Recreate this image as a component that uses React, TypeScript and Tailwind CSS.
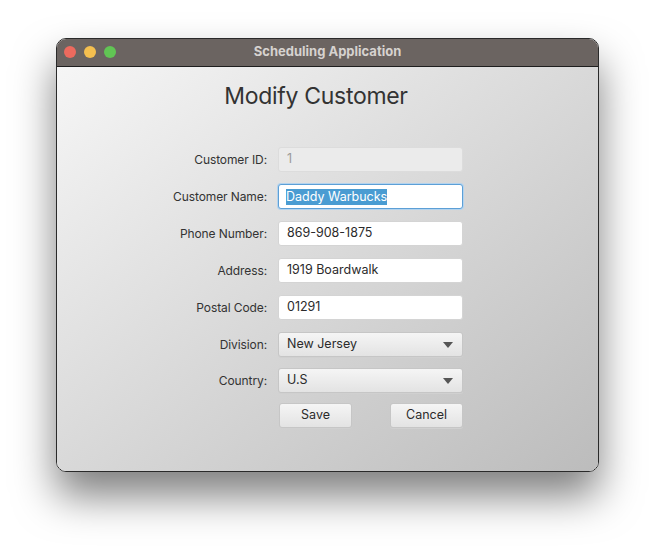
import { ReactNode } from "react";

const font = { fontFamily: "Inter, 'Liberation Sans', sans-serif" };

function Label({ children }: { children: ReactNode }) {
  return (
    <div className="flex h-[25px] items-center justify-end text-[12px] tracking-[-0.1px] text-[#333333]">
      {children}
    </div>
  );
}

function TextField({ value, disabled }: { value: string; disabled?: boolean }) {
  return (
    <div
      className={`flex h-[25px] items-center rounded-[3px] px-[8px] text-[12.5px] ${
        disabled
          ? "border border-[#dcdcdc] bg-[#ebebeb] text-[#9a9a9a]"
          : "border border-[#d4d4d4] bg-white text-[#2b2b2b]"
      }`}
    >
      {value}
    </div>
  );
}

function FocusedField({ value }: { value: string }) {
  return (
    <div className="flex h-[25px] items-center rounded-[3px] border border-[#5c9fd6] bg-white px-[7px] text-[12.5px] shadow-[0_0_0_1px_#b3d3ee]">
      <span className="bg-[#4a9cd2] leading-[16px] text-white">{value}</span>
    </div>
  );
}

function Combo({ value }: { value: string }) {
  return (
    <div className="flex h-[25px] items-center justify-between rounded-[3px] border border-[#c6c6c6] bg-gradient-to-b from-[#f5f5f5] to-[#e3e3e3] pl-[8px] pr-[9px] text-[12.5px] text-[#2b2b2b] shadow-[0_1px_0_#d0d0d0]">
      <span>{value}</span>
      <svg width="10" height="6" viewBox="0 0 10 6">
        <path d="M0 0h10L5 6z" fill="#555555" />
      </svg>
    </div>
  );
}

function Button({ children }: { children: ReactNode }) {
  return (
    <div className="flex h-[25px] w-[73px] items-center justify-center rounded-[3px] border border-[#c6c6c6] bg-gradient-to-b from-[#f5f5f5] to-[#e3e3e3] text-[12.5px] text-[#2b2b2b] shadow-[0_1px_0_#d0d0d0]">
      {children}
    </div>
  );
}

export default function App() {
  const rows: [string, ReactNode][] = [
    ["Customer ID:", <TextField value="1" disabled />],
    ["Customer Name:", <FocusedField value="Daddy Warbucks" />],
    ["Phone Number:", <TextField value="869-908-1875" />],
    ["Address:", <TextField value="1919 Boardwalk" />],
    ["Postal Code:", <TextField value="01291" />],
  ];

  return (
    <div className="h-[546px] w-[655px] bg-white pl-[56px] pt-[38px]" style={font}>
      <div className="flex h-[434px] w-[543px] flex-col overflow-hidden rounded-[10px] border border-[#2a2a2a] shadow-[0_24px_42px_rgba(0,0,0,0.5)]">
        {/* title bar */}
        <div className="relative flex h-[28px] shrink-0 items-center justify-center border-b border-[#1e1e1e] bg-[#6b6461]">
          <div className="absolute left-[7px] top-[7px] flex gap-[8px]">
            <span className="h-[12px] w-[12px] rounded-full bg-[#ec6a5e]" />
            <span className="h-[12px] w-[12px] rounded-full bg-[#f4bf4f]" />
            <span className="h-[12px] w-[12px] rounded-full bg-[#61c554]" />
          </div>
          <span className="-mt-[2px] text-[13px] font-bold text-[#d6d2cf]">Scheduling Application</span>
        </div>

        {/* body */}
        <div className="flex flex-1 flex-col bg-gradient-to-br from-[#f6f6f6] to-[#bcbcbc]">
          <h1 className="mt-[14px] pr-[23px] text-center text-[23px] leading-[30px] tracking-[-0.3px] text-[#333333]">
            Modify Customer
          </h1>

          <div className="mt-[36px] grid grid-cols-[210px_185px] gap-x-[11px]">
            {rows.map(([label, field]) => (
              <div key={label} className="contents">
                <div className="h-[37px]">
                  <Label>{label}</Label>
                </div>
                <div className="h-[37px]">{field}</div>
              </div>
            ))}
            <div className="h-[36px]">
              <Label>Division:</Label>
            </div>
            <div className="h-[36px]">
              <Combo value="New Jersey" />
            </div>
            <div className="h-[35px]">
              <Label>Country:</Label>
            </div>
            <div className="h-[35px]">
              <Combo value="U.S" />
            </div>
            <div />
            <div className="flex justify-between pl-[1px]">
              <Button>Save</Button>
              <Button>Cancel</Button>
            </div>
          </div>
        </div>
      </div>
    </div>
  );
}
